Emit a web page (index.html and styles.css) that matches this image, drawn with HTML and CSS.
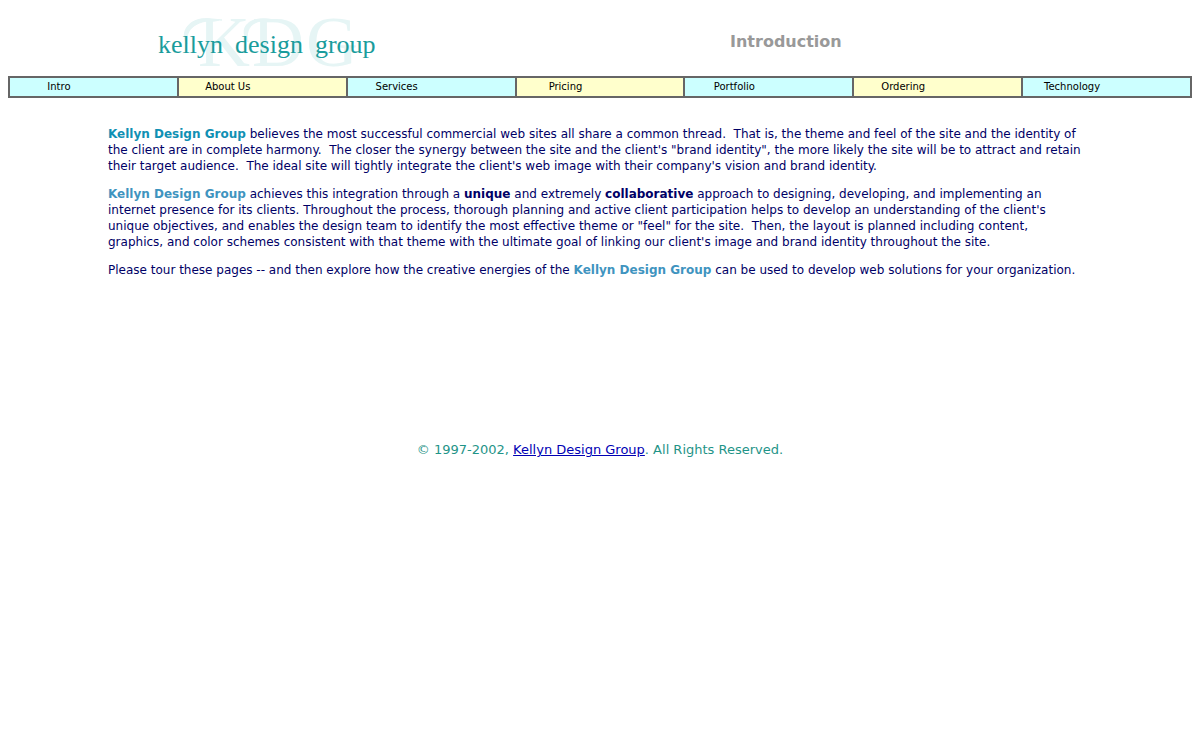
FILE: index.html
```
<!DOCTYPE html>
<html lang="en">
<head>
<meta charset="utf-8">
<title>Kellyn Design Group - Introduction</title>
<link rel="stylesheet" href="styles.css">
</head>
<body>
<header class="masthead">
  <div class="brand">
    <svg class="swashes" width="100" height="60" viewBox="0 0 100 60" aria-hidden="true">
      <path d="M7 30C-1 17 10 2 32 5L42 6C25 5 4 10 7 30Z"/>
      <path d="M68 28C59 16 66 3 88 5L94 6C78 5 64 10 68 28Z"/>
    </svg>
    <span class="monogram" aria-hidden="true"><span>K</span><span>D</span><span>G</span></span>
    <span class="wordmark"><span>kellyn</span> <span>design</span> <span>group</span></span>
  </div>
  <h1 class="title">Introduction</h1>
</header>
<nav class="menu">
  <a href="#intro">Intro</a>
  <a href="#about">About Us</a>
  <a href="#services">Services</a>
  <a href="#pricing">Pricing</a>
  <a href="#portfolio">Portfolio</a>
  <a href="#ordering">Ordering</a>
  <a href="#technology">Technology</a>
</nav>
<main class="content">
  <p><b class="name first">Kellyn Design Group</b> believes the most successful commercial web sites all share a common thread.&nbsp; That is, the theme and feel of the site and the identity of the client are in complete harmony.&nbsp; The closer the synergy between the site and the client's "brand identity", the more likely the site will be to attract and retain their target audience.&nbsp; The ideal site will tightly integrate the client's web image with their company's vision and brand identity.</p>
  <p><b class="name">Kellyn Design Group</b> achieves this integration through a <b>unique</b> and extremely <b>collaborative</b> approach to designing, developing, and implementing an internet presence for its clients. Throughout the process, thorough planning and active client participation helps to develop an understanding of the client's unique objectives, and enables the design team to identify the most effective theme or "feel" for the site.&nbsp; Then, the layout is planned including content, graphics, and color schemes consistent with that theme with the ultimate goal of linking our client's image and brand identity throughout the site.</p>
  <p>Please tour these pages -- and then explore how the creative energies of the <b class="name">Kellyn Design Group</b> can be used to develop web solutions for your organization.</p>
</main>
<footer class="footer">© 1997-2002, <a href="#home">Kellyn Design Group</a>. All Rights Reserved.</footer>
</body>
</html>
```
FILE: styles.css
```
body {
  margin: 8px;
  background: #fff;
  color: #000066;
  font-family: Verdana, "DejaVu Sans", sans-serif;
}
.masthead {
  display: grid;
  grid-template-columns: 1fr 1fr;
  align-items: center;
  height: 68px;
}
.brand {
  position: relative;
  padding: 6px 0 0 150px;
}
.monogram,
.swashes {
  position: absolute;
}
.monogram {
  left: 190px;
  top: -17px;
  display: flex;
  gap: 2px;
  color: #e6f5f5;
  font: 72px/72px "Liberation Serif", serif;
}
.swashes {
  left: 172px;
  top: -9px;
  fill: #e6f5f5;
  stroke: #e6f5f5;
  stroke-width: 1;
}
.wordmark {
  position: relative;
  display: flex;
  gap: 12px;
  color: #1a9c9c;
  font: 26px/32px "Liberation Serif", serif;
}
.title {
  margin: 0;
  padding-left: 130px;
  color: #999;
  font-size: 16px;
  line-height: 20px;
}
.menu {
  display: grid;
  grid-template-columns: repeat(7, 1fr);
  gap: 2px;
  padding: 2px;
  background: #666;
}
.menu a {
  padding-right: 69px;
  background: #ccffff;
  color: #000;
  font-size: 10px;
  line-height: 18px;
  text-align: center;
  text-decoration: none;
}
.menu a:nth-child(even) {
  background: #ffffcc;
}
.content {
  margin: 28px 106px 0 100px;
  font-size: 12px;
  line-height: 16px;
}
.content p {
  margin: 0 0 12px;
}
.name {
  color: #3f94bf;
}
.name.first {
  color: #1090b4;
}
.footer {
  margin-top: 164px;
  color: #1f9488;
  font-size: 13px;
  line-height: 16px;
  text-align: center;
}
.footer a {
  color: #0000b4;
}
```
